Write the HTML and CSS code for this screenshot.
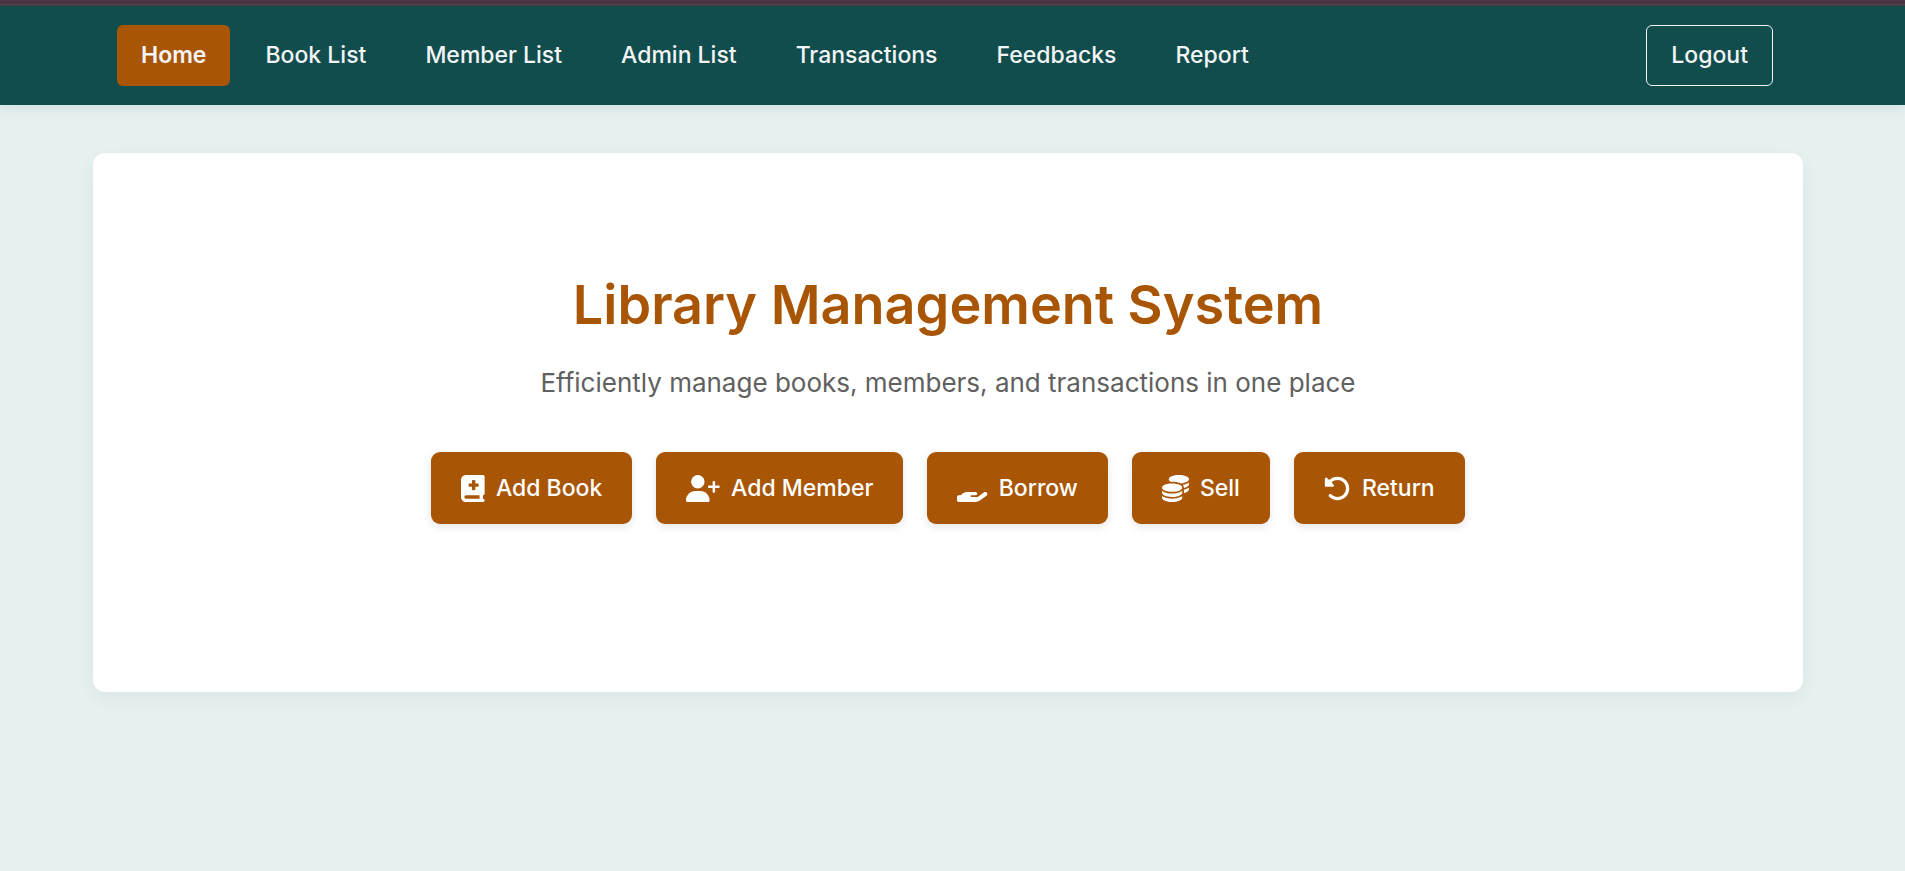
FILE: index.html
```html
<!DOCTYPE html>
<html lang="en">
<head>
<meta charset="utf-8">
<meta name="viewport" content="width=device-width, initial-scale=1">
<title>Library Management System</title>
<link rel="stylesheet" href="styles.css">
</head>
<body>
<div class="top-strip"></div>
<header class="navbar">
  <div class="navbar-inner">
    <nav class="nav-links" aria-label="Main">
      <a class="nav-link active" href="#" aria-current="page">Home</a>
      <a class="nav-link" href="#books">Book List</a>
      <a class="nav-link" href="#members">Member List</a>
      <a class="nav-link" href="#admins">Admin List</a>
      <a class="nav-link" href="#transactions">Transactions</a>
      <a class="nav-link" href="#feedbacks">Feedbacks</a>
      <a class="nav-link" href="#report">Report</a>
    </nav>
    <button class="logout" type="button">Logout</button>
  </div>
</header>
<main class="hero">
  <h1 class="hero-title">Library Management System</h1>
  <p class="hero-text">Efficiently manage books, members, and transactions in one place</p>
  <div class="actions">
    <button class="action" type="button">
      <svg class="icon" viewBox="0 0 448 512" aria-hidden="true"><path d="M0 96C0 43 43 0 96 0H384h32c17.700 0 32 14.300 32 32V352c0 17.700-14.300 32-32 32v64c17.700 0 32 14.300 32 32s-14.300 32-32 32H384 96c-53 0-96-43-96-96V96zM64 416c0 17.700 14.300 32 32 32H352V384H96c-17.700 0-32 14.300-32 32zM208 112v48H160c-8.800 0-16 7.200-16 16v32c0 8.800 7.200 16 16 16h48v48c0 8.800 7.200 16 16 16h32c8.800 0 16-7.200 16-16V224h48c8.800 0 16-7.200 16-16V176c0-8.800-7.200-16-16-16H272V112c0-8.800-7.200-16-16-16H224c-8.800 0-16 7.200-16 16z"/></svg>
      Add Book
    </button>
    <button class="action" type="button">
      <svg class="icon" viewBox="0 0 640 512" aria-hidden="true"><path d="M96 128a128 128 0 1 1 256 0A128 128 0 1 1 96 128zM0 482.300C0 383.800 79.800 304 178.300 304h91.400C368.200 304 448 383.800 448 482.300c0 16.400-13.300 29.700-29.700 29.700H29.700C13.300 512 0 498.700 0 482.300zM504 312V248H440c-13.300 0-24-10.700-24-24s10.700-24 24-24h64V136c0-13.300 10.700-24 24-24s24 10.700 24 24v64h64c13.300 0 24 10.700 24 24s-10.700 24-24 24H552v64c0 13.300-10.700 24-24 24s-24-10.700-24-24z"/></svg>
      Add Member
    </button>
    <button class="action" type="button">
      <svg class="icon" viewBox="0 0 576 512" aria-hidden="true"><path d="M559.700 392.200c17.800-13.100 21.600-38.100 8.500-55.900s-38.100-21.600-55.900-8.500L392.600 416H272c-8.800 0-16-7.200-16-16s7.200-16 16-16h16 64c17.700 0 32-14.300 32-32s-14.300-32-32-32H288 272 193.700c-29.100 0-57.300 9.900-80 28L68.800 384H32c-17.700 0-32 14.300-32 32v64c0 17.700 14.300 32 32 32H192 352.500c29 0 57.300-9.300 80.700-26.500l126.600-93.300z"/></svg>
      Borrow
    </button>
    <button class="action" type="button">
      <svg class="icon" viewBox="0 0 512 512" aria-hidden="true"><path d="M512 80c0 18-14.300 34.600-38.400 48c-29.100 16.100-72.500 27.500-122.300 30.900c-3.700-1.800-7.400-3.500-11.300-5C300.600 137.400 248.200 128 192 128c-8.300 0-16.400 .2-24.500 .6l-1.100-.6C142.300 114.600 128 98 128 80c0-44.200 86-80 192-80S512 35.800 512 80zM160.700 161.100c10.200-.7 20.700-1.100 31.300-1.100c62.200 0 117.400 12.300 152.500 31.400C369.300 204.900 384 221.700 384 240c0 4-.7 7.900-2.100 11.700c-4.600 13.200-17 25.300-35 35.500c-.1 .1-.3 .1-.4 .2c-.3 .2-.6 .3-.9 .5c-35 19.400-90.800 32-153.600 32c-59.600 0-112.900-11.300-148.200-29.100c-1.900-.9-3.700-1.900-5.500-2.900C14.300 274.600 0 258 0 240c0-34.800 53.400-64.500 128-75.400c10.500-1.500 21.400-2.700 32.700-3.500zM416 240c0-21.900-10.600-39.900-24.100-53.400c28.300-4.400 54.200-11.400 76.200-20.500c16.300-6.800 31.500-15.200 43.900-25.500V176c0 19.300-16.500 37.100-43.800 50.900c-14.600 7.400-32.400 13.700-52.400 18.500c.1-1.800 .2-3.500 .2-5.300zm-32 96c0 18-14.300 34.600-38.400 48c-1.800 1-3.600 1.900-5.500 2.900C304.900 404.700 251.600 416 192 416c-62.800 0-118.600-12.600-153.600-32C14.300 370.600 0 354 0 336V300.600c12.500 10.300 27.600 18.700 43.900 25.500C83.400 342.600 135.800 352 192 352s108.600-9.400 148.100-25.900c7.800-3.200 15.300-6.900 22.400-10.900c6.100-3.400 11.800-7.200 17.200-11.200c1.500-1.100 2.900-2.300 4.300-3.400V304v5.700V336zm32 0V304 278.100c19-4.200 36.500-9.500 52.100-16c16.300-6.800 31.500-15.200 43.900-25.500V272c0 10.500-5 21-14.900 30.900c-16.300 16.300-45 29.700-81.300 38.400c.1-1.700 .2-3.500 .2-5.300zM192 448c56.200 0 108.600-9.400 148.100-25.900c16.300-6.800 31.500-15.200 43.900-25.500V432c0 44.200-86 80-192 80S0 476.200 0 432V396.600c12.500 10.300 27.600 18.700 43.900 25.500C83.400 438.600 135.800 448 192 448z"/></svg>
      Sell
    </button>
    <button class="action" type="button">
      <svg class="icon" viewBox="0 0 512 512" aria-hidden="true"><path d="M48.500 224H40c-13.300 0-24-10.700-24-24V72c0-9.700 5.800-18.500 14.800-22.200s19.300-1.700 26.200 5.200L98.600 96.600c87.600-86.500 228.700-86.200 315.800 1c87.500 87.500 87.500 229.300 0 316.800s-229.300 87.500-316.800 0c-12.500-12.500-12.500-32.800 0-45.300s32.800-12.500 45.300 0c62.500 62.500 163.800 62.500 226.300 0s62.500-163.800 0-226.300c-62.200-62.200-162.700-62.500-225.300-1L185 183c6.900 6.900 8.900 17.200 5.200 26.200s-12.500 14.800-22.200 14.800H48.500z"/></svg>
      Return
    </button>
  </div>
</main>
</body>
</html>
```
FILE: styles.css
```css
* {
  box-sizing: border-box;
}

body {
  margin: 0;
  min-height: 100vh;
  background: #e4f1f0;
  color: #f3f4f6;
  font-family: Inter, "Liberation Sans", sans-serif;
  font-size: 23px;
}

.top-strip {
  height: 6px;
  background: linear-gradient(#4b3444 4px, #5b4448 4px 5px, #443c47 5px);
}

.navbar {
  padding: 19px 102px 19px 93px;
  background: #104d4c;
  box-shadow: 0 3px 12px rgba(0, 0, 0, 0.08);
}

.navbar-inner {
  display: flex;
  justify-content: space-between;
  align-items: center;
  padding: 0 30px 0 24px;
}

.nav-links {
  display: flex;
  gap: 11px;
}

.nav-link,
.logout {
  padding: 12px 24px;
  border-radius: 6px;
  color: #f3f4f6;
  font: inherit;
  font-weight: 500;
  line-height: 37px;
  text-decoration: none;
  white-space: nowrap;
}

.nav-link.active {
  background: #a85505;
  font-weight: 600;
}

.logout {
  padding: 11px 24px;
  border: 1px solid #f3f4f6;
  background: transparent;
}

.hero {
  margin: 48px 102px 48px 93px;
  padding: 120px 48px 168px;
  border-radius: 12px;
  background: #fff;
  box-shadow: 0 6px 18px rgba(0, 0, 0, 0.05);
  text-align: center;
}

.hero-title {
  margin: 0 0 24px;
  color: #a85505;
  font-size: 54px;
  font-weight: 600;
  line-height: 64px;
}

.hero-text {
  margin: 0 0 48px;
  color: #5f6060;
  font-size: 26px;
  line-height: 43px;
}

.actions {
  display: flex;
  flex-wrap: wrap;
  justify-content: center;
  gap: 24px;
}

.action {
  display: flex;
  align-items: center;
  gap: 11px;
  padding: 18px 30px;
  border: 0;
  border-radius: 9px;
  background: #a85505;
  box-shadow: 0 3px 8px rgba(0, 0, 0, 0.1);
  color: #fff;
  font: inherit;
  font-weight: 500;
  line-height: 36px;
}

.icon {
  height: 27px;
  fill: currentColor;
}
```
